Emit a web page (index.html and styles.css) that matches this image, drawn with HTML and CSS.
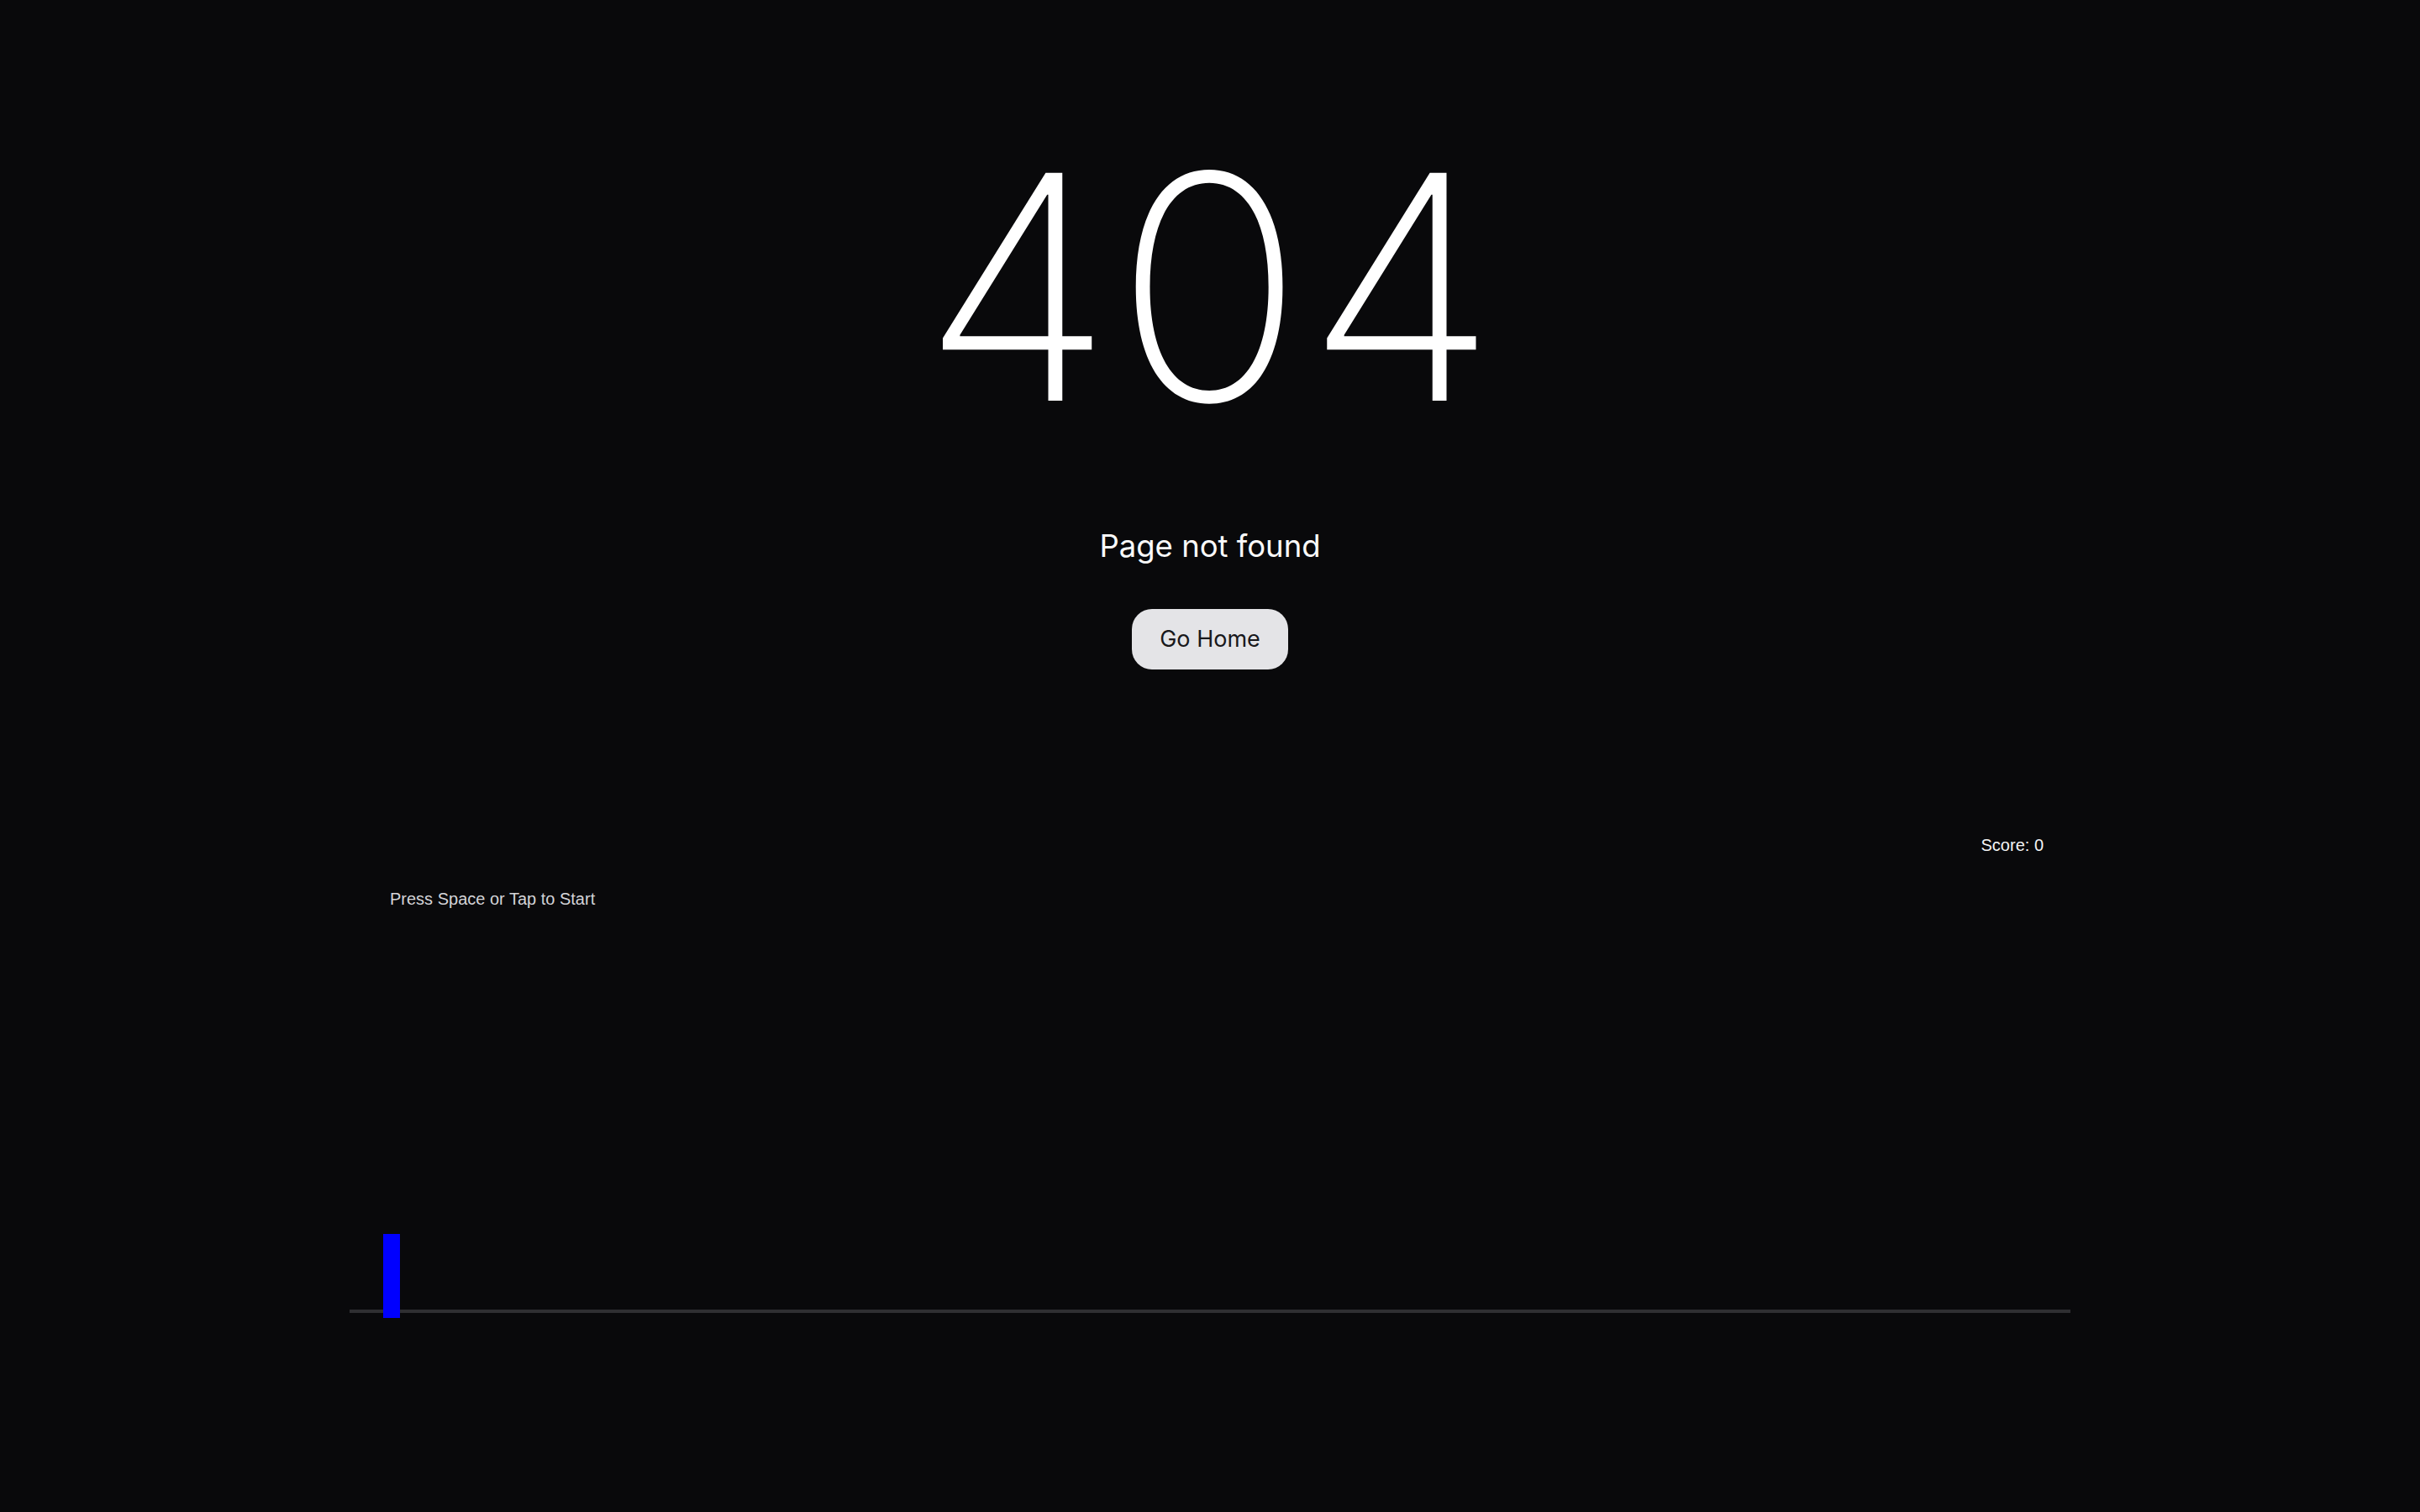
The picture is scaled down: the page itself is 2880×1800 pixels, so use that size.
FILE: index.html
```html
<!DOCTYPE html>
<html lang="en">
<head>
<meta charset="utf-8">
<title>404 - Page not found</title>
<link rel="stylesheet" href="styles.css">
</head>
<body>
<main class="page">
  <h1 class="code">404</h1>
  <p class="message">Page not found</p>
  <a class="home-btn" href="#">Go Home</a>
  <section class="game">
    <div class="score">Score: 0</div>
    <div class="hint">Press Space or Tap to Start</div>
    <div class="ground"><div class="player"></div></div>
  </section>
</main>
</body>
</html>
```

FILE: styles.css
```css
html, body {
  margin: 0;
  padding: 0;
  background: #09090b;
  height: 100%;
  overflow: hidden;
}

.page {
  display: flex;
  flex-direction: column;
  align-items: center;
  padding-top: 155px;
  font-family: "Inter", "Noto Sans", sans-serif;
  color: #fafafa;
}

.code {
  margin: 0;
  font-size: 373px;
  line-height: 1;
  font-weight: 200;
  letter-spacing: 0.005em;
  color: #ffffff;
}

.message {
  margin: 104px 0 0;
  font-size: 36.5px;
  line-height: 1;
  font-weight: 400;
}

.home-btn {
  margin-top: 56px;
  display: inline-flex;
  align-items: center;
  justify-content: center;
  height: 72px;
  padding: 0 33px;
  border-radius: 24px;
  background: #e4e4e7;
  color: #18181b;
  font-size: 27px;
  line-height: 27px;
  text-decoration: none;
}

.game {
  margin-top: 199px;
  width: 2048px;
  font-family: "Liberation Sans", Arial, sans-serif;
  font-size: 20px;
  line-height: 20px;
}

.score {
  text-align: right;
  padding-right: 32px;
  color: #f4f4f5;
}

.hint {
  margin-top: 44px;
  padding-left: 48px;
  color: #d4d4d8;
}

.ground {
  position: relative;
  margin-top: 479px;
  height: 4px;
  background: #2f2f32;
}

.player {
  position: absolute;
  left: 40px;
  top: -90px;
  width: 20px;
  height: 100px;
  background: #0000ff;
}
```
